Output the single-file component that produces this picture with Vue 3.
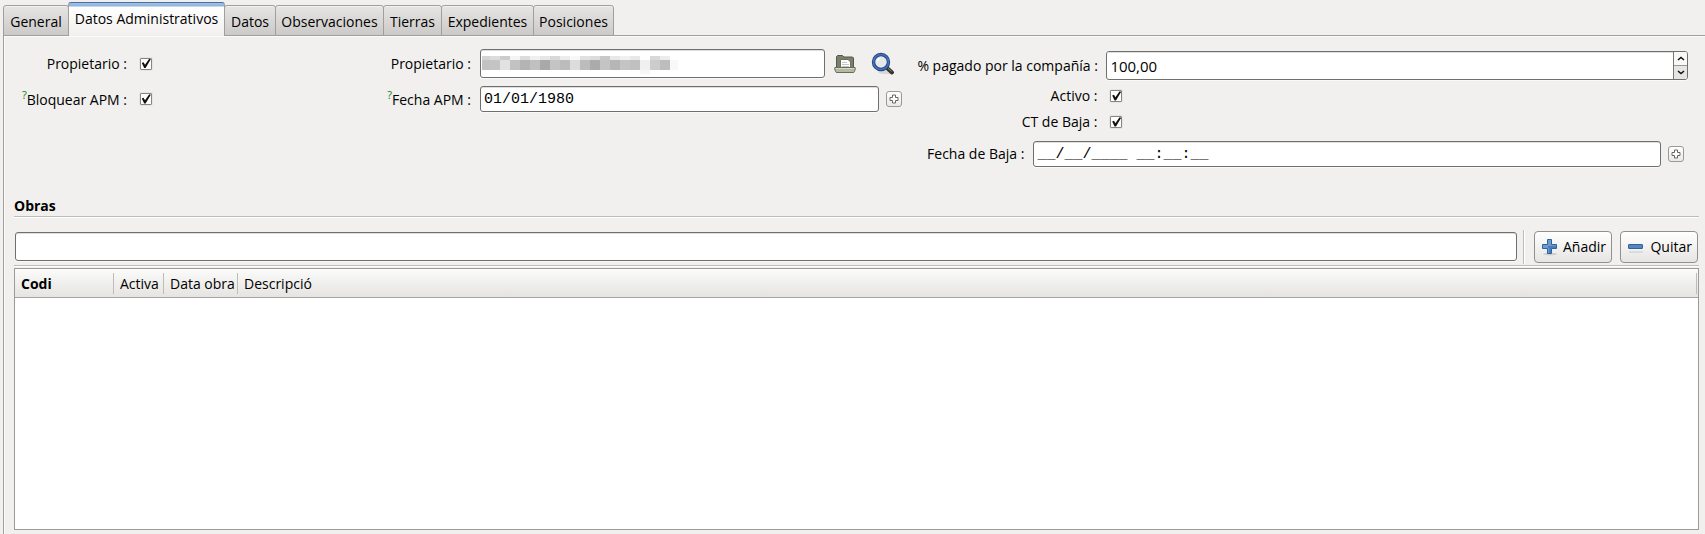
<script setup>
import { ref } from 'vue'

const tabs = [
  { name: 'General', size: 'w-general' },
  { name: 'Datos Administrativos', size: 'w-admin' },
  { name: 'Datos', size: 'w-datos' },
  { name: 'Observaciones', size: 'w-obs' },
  { name: 'Tierras', size: 'w-tierras' },
  { name: 'Expedientes', size: 'w-exp' },
  { name: 'Posiciones', size: 'w-pos' },
]
const active = ref(1)

const isOwner = ref(true)
const lockApm = ref(true)
const owner = ref('')
const apmDate = ref('01/01/1980')
const paid = ref('100,00')
const enabled = ref(true)
const ctOff = ref(true)
const offDate = ref('__/__/____ __:__:__')
const search = ref('')

const maskTop = ['d4', 'dc', 'cc', 'f4', 'dc', 'f0', 'e6', 'd8', 'ec', 'f8', 'e0', 'dc', 'c8', 'e8', 'f0', 'e8', 'ff', 'd8', 'ec', 'ff']
const maskMid = ['c2', 'c4', 'e2', 'c2', 'b4', 'c0', 'a9', 'c4', 'bc', 'dc', 'bc', 'ab', 'c4', 'b6', 'c4', 'c0', 'f0', 'cc', 'bd', 'f8']
const grey = (v) => '#' + v + v + v
</script>

<template>
  <div class="window">
    <div class="tabs" role="tablist">
      <button
        v-for="(t, i) in tabs"
        :key="t.name"
        type="button"
        role="tab"
        :aria-selected="i === active"
        :class="['tab', t.size, { active: i === active }]"
        @click="active = i"
      >{{ t.name }}</button>
    </div>

    <main class="panel">
      <form class="form" @submit.prevent>
        <div class="group checks">
          <div class="row tall">
            <label for="is-owner">Propietario :</label>
            <input id="is-owner" v-model="isOwner" type="checkbox">
          </div>
          <div class="row">
            <label for="lock-apm"><sup>?</sup>Bloquear APM :</label>
            <input id="lock-apm" v-model="lockApm" type="checkbox">
          </div>
        </div>

        <div class="group middle">
          <div class="row tall">
            <label for="owner">Propietario :</label>
            <div class="masked">
              <input id="owner" v-model="owner" class="field large" type="text">
              <svg class="mask" width="196" height="18" viewBox="0 0 196 18" shape-rendering="crispEdges" aria-hidden="true">
                <g v-for="(v, i) in maskMid" :key="i">
                  <rect :x="i * 10 - 2" y="0" width="10" height="4" :fill="grey(maskTop[i])" />
                  <rect :x="i * 10 - 2" y="4" width="10" height="10" :fill="grey(v)" />
                </g>
                <rect x="158" y="14" width="10" height="4" fill="#f6f6f6" />
              </svg>
            </div>
            <button class="icon open" type="button" aria-label="Abrir">
              <svg width="24" height="24" viewBox="0 0 24 24">
                <path d="M3.500 16V4.500L4.500 3.500H9.500L11 5H19.500L20.500 6V16Z" fill="#7b8069" stroke="#54584a" />
                <path d="M7.500 7.500H15L17.500 10V17H7.500Z" fill="#fff" stroke="#6b6e62" />
                <path d="M9 10.500H14M9 12.500H16M9 14.500H16" stroke="#c5c5c5" />
                <path d="M2 15.500H22Q22.500 15.500 22.400 16.500L21.500 19.500Q21.300 20.500 20 20.500H4Q2.700 20.500 2.500 19.500L1.600 16.500Q1.500 15.500 2 15.500Z" fill="#b4b9a2" stroke="#686d5a" />
                <path d="M3 16.500H21" stroke="#d5d9c8" />
              </svg>
            </button>
            <button class="icon find" type="button" aria-label="Buscar">
              <svg width="24" height="24" viewBox="0 0 24 24">
                <ellipse cx="15" cy="20" rx="8" ry="2" fill="#000" opacity=".1" />
                <path d="M15.500 15.500L21 20.500" stroke="#33332f" stroke-width="4" stroke-linecap="round" />
                <path d="M17 16.300L20.500 19.500" stroke="#8a8a80" stroke-width="1" />
                <circle cx="10" cy="10" r="7.500" fill="#e4e8ea" stroke="#23427f" stroke-width="3.400" />
                <circle cx="10" cy="10" r="7.500" fill="none" stroke="#4270bd" stroke-width="1.700" />
                <path d="M5.500 10Q6 6 10 5.500Q8.500 8 5.500 10Z" fill="#fff" />
              </svg>
            </button>
          </div>
          <div class="row">
            <label for="apm-date"><sup>?</sup>Fecha APM :</label>
            <input id="apm-date" v-model="apmDate" class="field mono" type="text">
            <button class="pick" type="button" aria-label="Elegir fecha APM">
              <svg width="10" height="10" viewBox="0 0 10 10"><path d="M3.500 1H6.500V3.500H9V6.500H6.500V9H3.500V6.500H1V3.500H3.500Z" fill="#fff" stroke="#666" /></svg>
            </button>
          </div>
        </div>

        <div class="group right">
          <div class="row spin-row">
            <label for="paid">% pagado por la compañía :</label>
            <div class="spin">
              <input id="paid" v-model="paid" type="text">
              <div class="steps">
                <button type="button" aria-label="Aumentar"><svg width="8" height="5" viewBox="0 0 8 5"><path d="M1 4L4 1.500L7 4" /></svg></button>
                <button type="button" aria-label="Disminuir"><svg width="8" height="5" viewBox="0 0 8 5"><path d="M1 1L4 3.500L7 1" /></svg></button>
              </div>
            </div>
          </div>
          <div class="row">
            <label for="enabled">Activo :</label>
            <input id="enabled" v-model="enabled" type="checkbox">
          </div>
          <div class="row">
            <label for="ct-off">CT de Baja :</label>
            <input id="ct-off" v-model="ctOff" type="checkbox">
          </div>
          <div class="row off-row">
            <label for="off-date">Fecha de Baja :</label>
            <input id="off-date" v-model="offDate" class="field mono" type="text">
            <button class="pick" type="button" aria-label="Elegir fecha de baja">
              <svg width="10" height="10" viewBox="0 0 10 10"><path d="M3.500 1H6.500V3.500H9V6.500H6.500V9H3.500V6.500H1V3.500H3.500Z" fill="#fff" stroke="#666" /></svg>
            </button>
          </div>
        </div>
      </form>

      <section class="works">
        <h2>Obras</h2>
        <div class="toolbar">
          <input v-model="search" class="field large" type="text" aria-label="Obras">
          <span class="divider"></span>
          <button class="action" type="button">
            <svg width="18" height="18" viewBox="0 0 18 18">
              <ellipse cx="9" cy="16" rx="7" ry="1.500" fill="#000" opacity=".12" />
              <path d="M6.500 1.500H10.500V6.500H15.500V10.500H10.500V15.500H6.500V10.500H1.500V6.500H6.500Z" fill="#729bcd" stroke="#3061a3" stroke-linejoin="round" />
              <path d="M7 9H15M9 9V15" stroke="#477fb8" stroke-width="2" />
            </svg>
            Añadir
          </button>
          <button class="action" type="button">
            <svg width="18" height="18" viewBox="0 0 18 18">
              <rect x="2" y="13" width="14" height="2" fill="#000" opacity=".08" />
              <rect x="1.500" y="6.500" width="14" height="4" rx=".5" fill="#5584bf" stroke="#3061a3" />
            </svg>
            Quitar
          </button>
        </div>
        <div class="list">
          <table>
            <thead>
              <tr>
                <th class="c-code" scope="col"><span>Codi</span></th>
                <th class="c-active" scope="col"><span>Activa</span></th>
                <th class="c-date" scope="col"><span>Data obra</span></th>
                <th scope="col"><span>Descripció</span></th>
              </tr>
            </thead>
            <tbody></tbody>
          </table>
        </div>
      </section>
    </main>
  </div>
</template>

<style>
body {
  background: #f1f0ee;
}
</style>

<style scoped>
* {
  box-sizing: border-box;
}
.window {
  display: flex;
  flex-direction: column;
  min-height: 100vh;
  padding: 2px 0 0 3px;
  background: #f1f0ee;
  color: #000;
  font: 14px/20px "Open Sans", "Noto Sans", sans-serif;
}
button,
input {
  margin: 0;
  color: inherit;
  font: inherit;
}
button {
  padding: 0;
}
.tabs {
  display: flex;
  align-items: flex-end;
  height: 34px;
  flex: none;
}
.tab {
  flex: none;
  height: 31px;
  margin-right: -1px;
  padding-top: 2px;
  border: 1px solid #a09f9d;
  border-radius: 3px 3px 0 0;
  background: linear-gradient(#e6e5e3, #cccac8);
  box-shadow: inset 0 1px #f3f2f1;
  white-space: nowrap;
}
.tab.active {
  position: relative;
  z-index: 1;
  height: 34px;
  padding-bottom: 3px;
  border-color: #4a6f9f #a09f9d;
  border-bottom: 0;
  background: linear-gradient(#a3c1e6, #8fb3df 3px, #fff 4px, #f1f0ee);
  box-shadow: none;
}
.w-general { width: 66px; }
.w-admin { width: 157px; }
.w-datos { width: 52px; }
.w-obs { width: 109px; }
.w-tierras { width: 59px; }
.w-exp { width: 93px; }
.w-pos { width: 81px; }

.panel {
  display: flex;
  flex: 1;
  flex-direction: column;
  margin-top: -1px;
  padding: 13px 6px 4px 10px;
  border: solid #a09f9d;
  border-width: 1px 0 0 1px;
  box-shadow: inset 1px 1px #fbfbfa;
}
.form {
  display: grid;
  grid-template-columns: 358px 536fr 790fr;
}
.group {
  display: flex;
  flex-direction: column;
  min-width: 0;
}
.row {
  display: flex;
  align-items: center;
  height: 26px;
}
.row.tall {
  height: 29px;
  margin-bottom: 8px;
}
.row label {
  flex: none;
  padding-top: 1px;
  text-align: right;
  white-space: nowrap;
}
.checks label {
  width: 113px;
}
.middle {
  padding-right: 6px;
}
.middle .tall {
  padding-right: 7px;
}
.middle label {
  width: 99px;
  margin-right: 9px;
}
.right {
  padding: 2px 11px 0 9px;
}
.right label {
  width: 180px;
  padding-top: 0;
}
sup {
  color: #0a820a;
  font-size: 11px;
  line-height: 0;
}
input[type="checkbox"] {
  appearance: none;
  display: grid;
  place-content: center;
  flex: none;
  width: 12px;
  height: 12px;
  margin-left: 13px;
  border: 1px solid #858585;
  border-radius: 1px;
  background: #fff;
  box-shadow: 0 0 0 1px #e6e5e3;
}
input[type="checkbox"]:checked::before {
  content: "";
  width: 10px;
  height: 10px;
  background: #111;
  clip-path: polygon(8% 46%, 26% 38%, 40% 62%, 82% 2%, 98% 8%, 46% 94%, 32% 94%);
}
.field {
  flex: 1;
  min-width: 0;
  height: 26px;
  padding: 0 3px;
  border: 1px solid #6f6f6e;
  border-radius: 3px;
  outline: 0;
  background: #fff;
  box-shadow: inset 0 1px #dedede, 0 1px #faf9f9;
}
.field.large {
  width: 100%;
  height: 29px;
}
.mono {
  font-family: "Liberation Mono", monospace;
  font-size: 15px;
}
.masked {
  position: relative;
  display: flex;
  flex: 1;
}
.mask {
  position: absolute;
  top: 7px;
  left: 2px;
}
.icon {
  display: flex;
  flex: none;
  border: 0;
  background: none;
}
.open {
  margin: 0 14px 0 8px;
}
.pick {
  display: grid;
  place-content: center;
  flex: none;
  width: 16px;
  height: 16px;
  margin-left: 7px;
  border: 1px solid #9a9997;
  border-radius: 3px;
  background: linear-gradient(#fff, #e9e8e6);
}
.spin-row {
  height: 29px;
  margin-bottom: 3px;
}
.spin {
  display: flex;
  flex: 1;
  height: 29px;
  margin-left: 9px;
  overflow: hidden;
  border: 1px solid #6f6f6e;
  border-radius: 3px;
  background: #fff;
  box-shadow: 0 1px #faf9f9;
}
.spin input {
  flex: 1;
  min-width: 0;
  padding: 0 3px;
  border: 0;
  outline: 0;
  background: none;
  box-shadow: inset 0 1px #dedede;
  font-size: 15px;
}
.steps {
  display: flex;
  flex-direction: column;
  width: 14px;
  border-left: 1px solid #777;
}
.steps button {
  display: grid;
  place-content: center;
  flex: 1;
  border: 0;
  background: #f8f8f7;
}
.steps button + button {
  border-top: 1px solid #999;
  background: #e6e5e3;
}
.steps path {
  fill: none;
  stroke: #111;
  stroke-width: 1.5;
}
.off-row {
  margin-top: 6px;
  margin-right: 4px;
}
.right .off-row label {
  width: 107px;
  margin-right: 9px;
}
.works {
  display: flex;
  flex: 1;
  flex-direction: column;
  margin-top: 28px;
}
h2 {
  margin: 0;
  padding-top: 1px;
  border-bottom: 1px solid #bdbcba;
  box-shadow: 0 1px #fff;
  font: bold 14px/20px "Open Sans", "Noto Sans", sans-serif;
}
.toolbar {
  display: flex;
  align-items: center;
  height: 49px;
  padding: 11px 1px 0;
  border-bottom: 1px solid #bdbcba;
  box-shadow: 0 1px #fff;
}
.divider {
  align-self: flex-end;
  width: 2px;
  height: 34px;
  margin: 0 9px 1px 6px;
  border-left: 1px solid #bdbcba;
  background: #fff;
}
.action {
  display: flex;
  align-items: center;
  justify-content: space-between;
  flex: none;
  width: 78px;
  height: 32px;
  padding: 0 5px 0 6px;
  border: 1px solid #91908e;
  border-radius: 4px;
  background: linear-gradient(#fff, #e6e5e3);
}
.action + .action {
  margin-left: 8px;
}
.list {
  flex: 1;
  margin-top: 2px;
  border: 1px solid #9c9b99;
  background: #fff;
}
table {
  width: 100%;
  border-collapse: separate;
  border-spacing: 0;
  table-layout: fixed;
}
th {
  height: 29px;
  padding: 4px 0 3px;
  border-bottom: 1px solid #a5a4a2;
  background: linear-gradient(#fbfbfa, #e5e4e2);
  font-weight: normal;
  text-align: left;
  white-space: nowrap;
}
th:last-child {
  padding-right: 1px;
}
th span {
  display: block;
  padding-left: 6px;
  border-right: 1px solid #bdbcba;
  line-height: 21px;
}
.c-code {
  width: 99px;
  font-weight: bold;
}
.c-active { width: 50px; }
.c-date { width: 74px; }
</style>
